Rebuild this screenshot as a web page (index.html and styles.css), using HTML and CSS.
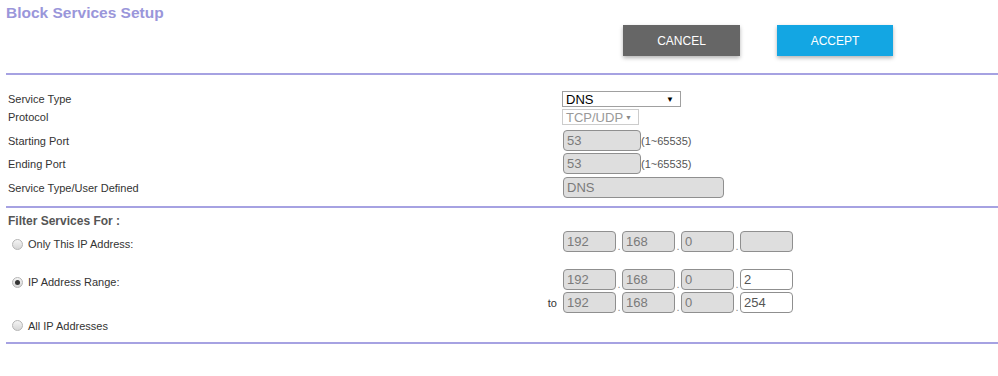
FILE: index.html
```html
<!DOCTYPE html>
<html lang="en">
  <head>
    <meta charset="UTF-8" />
    <meta name="viewport" content="width=device-width, initial-scale=1.0" />
    <title>Block Services Setup</title>
    <link rel="stylesheet" href="styles.css">
  </head>
  <body>
    <div class="page">
      <div class="header">
        <h1 class="title">Block Services Setup</h1>
        <div class="actions">
          <button type="button" class="btn btn-cancel">CANCEL</button>
          <button type="submit" class="btn btn-accept">ACCEPT</button>
        </div>
      </div>

      <div class="section service">
        <div class="row row-select">
          <span class="label">Service Type</span>
          <span class="select select-main">
            <span>DNS</span>
            <span class="arrow">&#9660;</span>
          </span>
        </div>
        <div class="row row-select gap-2">
          <span class="label">Protocol</span>
          <span class="select select-off">
            <span>TCP/UDP</span>
            <span class="arrow">&#9660;</span>
          </span>
        </div>
        <div class="row gap-5">
          <span class="label">Starting Port</span>
          <span class="field">
            <input class="box port" type="text" value="53" disabled />
            <span class="hint">(1~65535)</span>
          </span>
        </div>
        <div class="row gap-2">
          <span class="label">Ending Port</span>
          <span class="field">
            <input class="box port" type="text" value="53" disabled />
            <span class="hint">(1~65535)</span>
          </span>
        </div>
        <div class="row gap-3">
          <span class="label">Service Type/User Defined</span>
          <span class="field">
            <input class="box wide" type="text" value="DNS" disabled />
          </span>
        </div>
      </div>

      <div class="section filter">
        <div class="filter-title">Filter Services For :</div>

        <div class="row ip-row first">
          <label class="label radio-label">
            <span class="radio"></span>
            Only This IP Address:
          </label>
          <span class="ip">
            <input class="box oct" type="text" value="192" disabled /><span class="dot">.</span>
            <input class="box oct" type="text" value="168" disabled /><span class="dot">.</span>
            <input class="box oct" type="text" value="0" disabled /><span class="dot">.</span>
            <input class="box oct" type="text" value="" disabled />
          </span>
        </div>

        <div class="row ip-row second">
          <label class="label radio-label">
            <span class="radio checked"></span>
            IP Address Range:
          </label>
          <span class="ip">
            <input class="box oct" type="text" value="192" disabled /><span class="dot">.</span>
            <input class="box oct" type="text" value="168" disabled /><span class="dot">.</span>
            <input class="box oct" type="text" value="0" disabled /><span class="dot">.</span>
            <input class="box oct edit" type="text" value="2" />
          </span>
        </div>
        <div class="row ip-row to-row">
          <span class="label to">to</span>
          <span class="ip">
            <input class="box oct" type="text" value="192" disabled /><span class="dot">.</span>
            <input class="box oct" type="text" value="168" disabled /><span class="dot">.</span>
            <input class="box oct" type="text" value="0" disabled /><span class="dot">.</span>
            <input class="box oct edit" type="text" value="254" />
          </span>
        </div>

        <div class="row all-row">
          <label class="label radio-label">
            <span class="radio"></span>
            All IP Addresses
          </label>
        </div>
      </div>
    </div>
  </body>
</html>
```

FILE: styles.css
```css
body {
  margin: 0;
  background-color: #ffffff;
  font-family: "Liberation Sans", Arial, sans-serif;
  color: #333333;
}

.page {
  padding-left: 6px;
}

.header {
  padding-top: 4px;
  padding-bottom: 17px;
  border-bottom: 2px solid #a6a2e2;
}

.title {
  margin: 0;
  font-size: 15.5px;
  line-height: 17px;
  font-weight: bold;
  color: #9a96da;
}

.actions {
  display: flex;
  gap: 37px;
  margin-top: 4px;
  margin-left: 617px;
}

.btn {
  height: 31px;
  border: none;
  color: #ffffff;
  font-family: "Liberation Sans", Arial, sans-serif;
  font-size: 12px;
  box-shadow: 0 2px 4px rgba(0, 0, 0, 0.3);
  cursor: pointer;
}

.btn-cancel {
  width: 117px;
  background-color: #666666;
}

.btn-accept {
  width: 116px;
  background-color: #13a6e3;
}

.section {
  padding-left: 2px;
  padding-bottom: 8px;
  border-bottom: 2px solid #a6a2e2;
}

.service {
  padding-top: 16px;
}

.row {
  display: grid;
  grid-template-columns: 555px 1fr;
  align-items: center;
  height: 21px;
  font-size: 11px;
}

.row-select {
  height: 16px;
}

.gap-2 {
  margin-top: 2px;
}

.gap-3 {
  margin-top: 3px;
}

.gap-5 {
  margin-top: 5px;
}

.label {
  color: #333333;
}

.select {
  display: flex;
  justify-content: space-between;
  align-items: center;
  box-sizing: border-box;
  height: 16px;
  margin-left: -1px;
  padding: 0 6px 0 3px;
  border: 1px solid #a0a0a0;
  background: #ffffff;
  font-size: 13px;
}

.select-main {
  width: 119px;
  color: #000000;
}

.select-off {
  width: 77px;
  color: #999999;
  border-color: #cccccc;
}

.arrow {
  font-size: 8px;
}

.select-off .arrow {
  font-size: 7px;
  color: #888888;
}

.field {
  display: flex;
  align-items: center;
}

.box {
  box-sizing: border-box;
  height: 21px;
  margin: 0;
  padding: 0 3px;
  border: 1px solid #8f8f8f;
  border-radius: 4px;
  background-color: #dedede;
  color: #7a7a7a;
  font-family: "Liberation Sans", Arial, sans-serif;
  font-size: 13px;
}

.port {
  width: 78px;
}

.wide {
  width: 161px;
}

.hint {
  font-size: 11px;
  color: #555555;
}

.filter {
  padding-top: 6px;
  padding-bottom: 9px;
}

.filter-title {
  height: 14px;
  font-size: 12px;
  line-height: 14px;
  font-weight: bold;
  color: #555555;
}

.ip {
  display: flex;
  align-items: flex-end;
}

.oct {
  width: 53px;
}

.edit {
  background-color: #ffffff;
  color: #555555;
}

.dot {
  width: 6px;
  text-align: center;
  font-size: 11px;
  line-height: 11px;
  color: #888888;
}

.radio-label {
  display: flex;
  align-items: center;
  gap: 5px;
  padding-left: 4px;
  padding-top: 5px;
}

.radio {
  display: inline-flex;
  align-items: center;
  justify-content: center;
  box-sizing: border-box;
  width: 11px;
  height: 11px;
  border: 1px solid #b5b5b5;
  border-radius: 50%;
  background: linear-gradient(#f4f4f4, #d6d6d6);
}

.radio.checked::after {
  content: "";
  width: 5px;
  height: 5px;
  border-radius: 50%;
  background: #333333;
}

.first {
  margin-top: 3px;
}

.second {
  margin-top: 17px;
}

.to-row {
  margin-top: 2px;
}

.to {
  text-align: right;
  padding-right: 6px;
}

.all-row {
  height: 16px;
  margin-top: 4px;
}

.all-row .radio-label {
  padding-top: 1px;
}
```
